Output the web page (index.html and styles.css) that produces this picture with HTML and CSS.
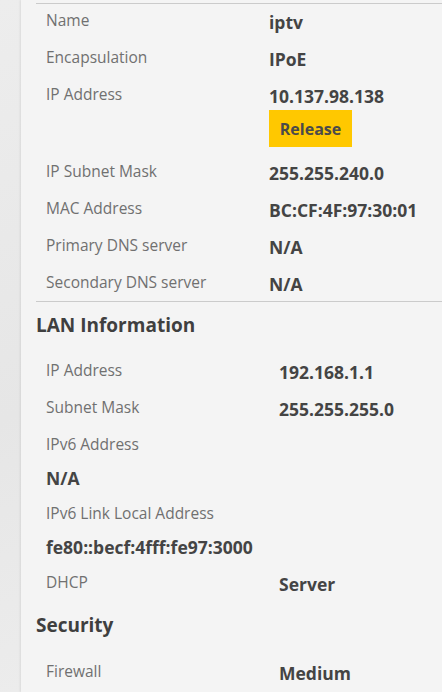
FILE: index.html
```html
<!DOCTYPE html>
<html lang="en">
<head>
  <meta charset="UTF-8">
  <meta name="viewport" content="width=device-width, initial-scale=1.0">
  <title>Connection Status</title>
  <link rel="stylesheet" href="styles.css">
</head>
<body>

<div class="page">
  <div class="side"></div>

  <div class="panel">
    <div class="info wan">
      <div class="row">
        <span class="label">Name</span>
        <span class="value">iptv</span>
      </div>
      <div class="row">
        <span class="label">Encapsulation</span>
        <span class="value">IPoE</span>
      </div>
      <div class="row">
        <span class="label">IP Address</span>
        <div class="value">
          10.137.98.138
          <button class="btn">Release</button>
        </div>
      </div>
      <div class="row">
        <span class="label">IP Subnet Mask</span>
        <span class="value">255.255.240.0</span>
      </div>
      <div class="row">
        <span class="label">MAC Address</span>
        <span class="value">BC:CF:4F:97:30:01</span>
      </div>
      <div class="row">
        <span class="label">Primary DNS server</span>
        <span class="value">N/A</span>
      </div>
      <div class="row">
        <span class="label">Secondary DNS server</span>
        <span class="value">N/A</span>
      </div>
    </div>

    <h2 class="lan-title">LAN Information</h2>
    <div class="info lan">
      <div class="row">
        <span class="label">IP Address</span>
        <span class="value">192.168.1.1</span>
      </div>
      <div class="row">
        <span class="label">Subnet Mask</span>
        <span class="value">255.255.255.0</span>
      </div>
      <div class="row stacked">
        <span class="label">IPv6 Address</span>
        <span class="value">N/A</span>
      </div>
      <div class="row stacked">
        <span class="label">IPv6 Link Local Address</span>
        <span class="value">fe80::becf:4fff:fe97:3000</span>
      </div>
      <div class="row">
        <span class="label">DHCP</span>
        <span class="value">Server</span>
      </div>
    </div>

    <h2 class="sec-title">Security</h2>
    <div class="info lan">
      <div class="row">
        <span class="label">Firewall</span>
        <span class="value">Medium</span>
      </div>
    </div>
  </div>
</div>

</body>
</html>
```

FILE: styles.css
```css
* {
  box-sizing: border-box;
}

body {
  margin: 0;
  font-family: 'Open Sans', 'Liberation Sans', sans-serif;
  background-color: #ebebeb;
  color: #444;
  overflow: hidden;
}

.page {
  display: flex;
  min-height: 692px;
}

.side {
  width: 21px;
  flex-shrink: 0;
  background: linear-gradient(160deg, #ededed, #e6e6e6 60%, #ececec);
}

.panel {
  flex: 1;
  background-color: #f4f4f4;
  padding: 3px 0 0 15px;
  box-shadow: -1px 0 2px rgba(0, 0, 0, 0.08);
}

.info {
  display: flex;
  flex-direction: column;
  gap: 13px;
}

.wan {
  border-top: 1px solid #cbcbcb;
  border-bottom: 1px solid #cbcbcb;
  padding: 5px 0 6px;
}

.row {
  display: grid;
  grid-template-columns: 223px 1fr;
  padding-left: 10px;
}

.lan .row {
  grid-template-columns: 233px 1fr;
}

.row.stacked {
  grid-template-columns: 1fr;
  row-gap: 10px;
}

.label {
  font-size: 15.5px;
  line-height: 22px;
  color: #707070;
}

.value {
  font-size: 17.5px;
  font-weight: bold;
  line-height: 22px;
  padding-top: 2px;
  color: #444;
}

.btn {
  display: block;
  margin-top: 3px;
  width: 83px;
  height: 37px;
  border: none;
  background-color: #ffc800;
  color: #4a4a4a;
  font-family: inherit;
  font-size: 16px;
  font-weight: bold;
  padding: 0;
}

h2 {
  font-size: 19px;
  line-height: 24px;
  font-weight: bold;
  color: #3f3f3f;
  margin: 0;
}

.lan-title {
  margin: 11px 0 22px;
}

.sec-title {
  margin: 18px 0 23px;
}
```
